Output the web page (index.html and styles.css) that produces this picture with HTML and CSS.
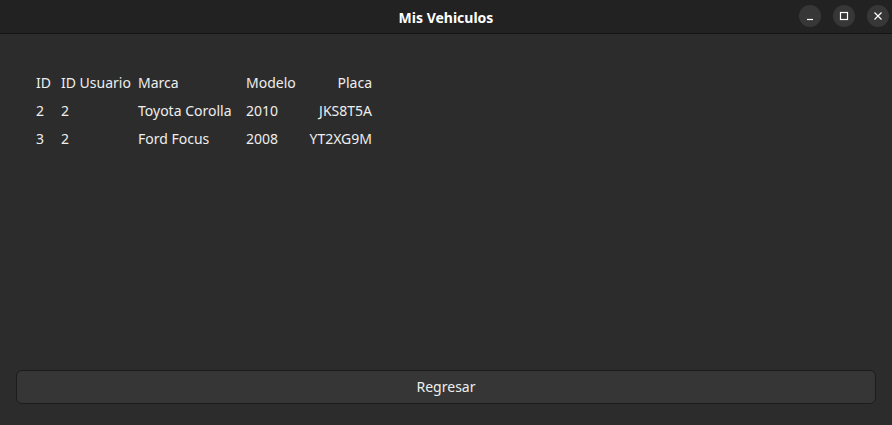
FILE: index.html
```html
<!DOCTYPE html>
<html lang="es">
<head>
<meta charset="utf-8">
<title>Mis Vehiculos</title>
<link rel="stylesheet" href="styles.css">
</head>
<body>
<div class="window">
  <header class="titlebar">
    <div class="title">Mis Vehiculos</div>
    <div class="controls">
      <span class="ctl"><svg width="10" height="10" viewBox="0 0 10 10"><path d="M2 8.5h6" stroke="#fff" stroke-width="1.2"/></svg></span>
      <span class="ctl"><svg width="10" height="10" viewBox="0 0 10 10"><rect x="1.5" y="1.5" width="7" height="7" fill="none" stroke="#fff" stroke-width="1.2"/></svg></span>
      <span class="ctl"><svg width="10" height="10" viewBox="0 0 10 10"><path d="M1.5 1.5l7 7M8.5 1.5l-7 7" stroke="#fff" stroke-width="1.2"/></svg></span>
    </div>
  </header>
  <main class="content">
    <div class="grid">
      <div class="cell">ID</div><div class="cell">ID Usuario</div><div class="cell">Marca</div><div class="cell">Modelo</div><div class="cell right">Placa</div>
      <div class="cell">2</div><div class="cell">2</div><div class="cell">Toyota Corolla</div><div class="cell">2010</div><div class="cell right">JKS8T5A</div>
      <div class="cell">3</div><div class="cell">2</div><div class="cell">Ford Focus</div><div class="cell">2008</div><div class="cell right">YT2XG9M</div>
    </div>
    <div class="spacer"></div>
    <button class="btn">Regresar</button>
  </main>
</div>
</body>
</html>
```

FILE: styles.css
```css
html, body {
  margin: 0;
  padding: 0;
  width: 892px;
  height: 425px;
  overflow: hidden;
  background: #2c2c2c;
  font-family: "Noto Sans", "Open Sans", sans-serif;
  color: #eeeeee;
}
.window {
  display: flex;
  flex-direction: column;
  height: 425px;
}
.titlebar {
  height: 33px;
  background: #222222;
  border-bottom: 1px solid #141414;
  display: flex;
  align-items: center;
  justify-content: center;
  position: relative;
  flex: none;
}
.title {
  font-weight: 700;
  font-size: 14px;
  color: #ffffff;
  padding-top: 1px;
}
.controls {
  position: absolute;
  right: 3px;
  top: 5px;
  display: flex;
  gap: 12px;
}
.ctl {
  width: 22px;
  height: 22px;
  border-radius: 50%;
  background: #373737;
  display: flex;
  align-items: center;
  justify-content: center;
}
.content {
  flex: 1;
  display: flex;
  flex-direction: column;
  padding: 34px 16px 21px 16px;
}
.grid {
  display: grid;
  grid-template-columns: 25px 77px 108px 60px 66px;
  grid-auto-rows: 28px;
  margin-left: 20px;
  font-size: 14px;
}
.cell {
  display: flex;
  align-items: center;
  white-space: nowrap;
}
.right {
  justify-content: flex-end;
}
.spacer {
  flex: 1;
}
.btn {
  height: 34px;
  border: 1px solid #1c1c1c;
  border-radius: 6px;
  background: #363636;
  color: #eeeeee;
  font-family: inherit;
  font-size: 14px;
  padding: 0 0 2px 0;
}
```
